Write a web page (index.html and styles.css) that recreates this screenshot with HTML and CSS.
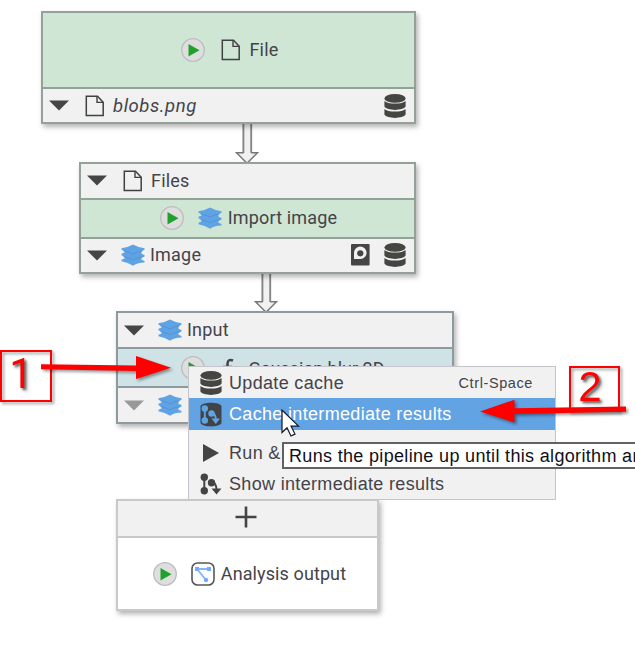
FILE: index.html
```
<!DOCTYPE html>
<html lang="en">
<head>
<meta charset="utf-8">
<title>Pipeline</title>
<link rel="stylesheet" href="styles.css">
</head>
<body>
<svg class="defs" aria-hidden="true">
  <defs>
    <symbol id="run" viewBox="0 0 24 24"><circle cx="12" cy="12" r="11.3" fill="#dedede" stroke="#bdbdbd" stroke-width="1.3"/><path d="M7.5 6v12.5l11-6.2z" fill="#20a12b"/></symbol>
    <symbol id="file" viewBox="0 0 20 22"><path d="M1.3 1.2h11.2l5.7 6v13.4H1.3z" fill="none" stroke="#3f4241" stroke-width="1.5"/><path d="M12 1.2v6.2h6.2" fill="none" stroke="#3f4241" stroke-width="1.4"/></symbol>
    <symbol id="tri" viewBox="0 0 20 11"><path d="M0 .5h20l-10 10z" fill="currentColor"/></symbol>
    <symbol id="db" viewBox="0 0 22 24"><g fill="#454541"><ellipse cx="11" cy="4.4" rx="10.6" ry="4.3"/><path d="M.4 7c3 3.4 18.200 3.400 21.200 0v5.600c-2.500 4.400-18.700 4.400-21.200 0zM.4 15c3 3.400 18.200 3.400 21.200 0v5.600c-2.500 4.400-18.700 4.400-21.200 0z"/></g></symbol>
    <symbol id="layers" viewBox="0 0 24 22"><path d="M.5 4.200Q7.500 3.200 12 .5q4.500 2.700 11.500 3.700v1.500l-3 1.600v2.400l3 1.300v1.500l-3 1.600v1.600l3 1.300v1.500Q17 18.500 12 21.700 7 18.500.5 17.200v-1.500l3-1.300v-1.600l-3-1.600V9.700l3-1.300V7.300l-3-1.600z" fill="#60a3e4"/><path d="M2.500 6.800q5 .7 9.500 3.200 4.500-2.500 9.500-3.200M2.500 12.600q5 .7 9.500 3.200 4.500-2.500 9.500-3.200" fill="none" stroke="#5095d6" stroke-width="1"/></symbol>
    <symbol id="preview" viewBox="0 0 19 22"><rect width="18.600" height="21.500" rx="1" fill="#454545"/><path d="M3 15V9.300a6.300 6.300 0 1 1 6.500 5.700z" fill="#f1f1f1"/><circle cx="9.300" cy="9.300" r="3.100" fill="#454545"/></symbol>
    <symbol id="graph" viewBox="0 0 22 22"><g fill="currentColor"><circle cx="4.300" cy="4.300" r="3.700"/><circle cx="4.300" cy="17.700" r="3.700"/><circle cx="11.500" cy="9.700" r="3.700"/><path d="M11.500 15.500h10L16.500 21.500z"/></g><path d="M4.300 4v14M11 8.500q5 .5 5.500 8" fill="none" stroke="currentColor" stroke-width="2"/></symbol>
    <symbol id="dbgraph" viewBox="0 0 22 25"><path d="M.5 4c2-4.500 19-4.500 21 0v17c-2 4.500-19 4.500-21 0z" fill="#414446"/><g fill="#62a3e4"><circle cx="4.800" cy="6.500" r="3.200"/><circle cx="4.800" cy="18.500" r="3.200"/><circle cx="11.500" cy="11.500" r="3.200"/><path d="M11.500 16.500h8.500L15.800 22z"/></g><path d="M4.800 6v12M11 10q4.500 1 4.900 7.500" fill="none" stroke="#62a3e4" stroke-width="1.900"/></symbol>
    <symbol id="output" viewBox="0 0 24 24"><rect x="1" y="1" width="22" height="22" rx="5.500" fill="#fff" stroke="#575757" stroke-width="1.600"/><path d="M6 7h12M6 7l9 11" fill="none" stroke="#82b4ff" stroke-width="1.800"/><g fill="#75a9fb"><path d="M4 5h4v4H4zM16 5h4v4h-4z"/><circle cx="15" cy="18" r="2.200"/></g></symbol>
    <symbol id="link" viewBox="0 0 24 40"><path d="M8.200 0v28.700H1.500L12 39.200l10.500-10.500h-6.300V0" fill="#f1f1f1"/><path d="M8.400 0v28.700M16.200 28.700V0" fill="none" stroke="#858585" stroke-width="1.900"/><path d="M8.800 28.700H1.500L12 39.200l10.500-10.500h-6.300" fill="none" stroke="#777" stroke-width="1.500"/></symbol>
  </defs>
</svg>
<main class="canvas">
  <svg class="link link-a"><use href="#link"/></svg>
  <svg class="link link-b"><use href="#link"/></svg>

  <section class="node green node-file">
    <div class="row algo tall"><svg class="run"><use href="#run"/></svg><svg class="file"><use href="#file"/></svg><span class="t-file">File</span></div>
    <div class="row slot"><svg class="tri"><use href="#tri"/></svg><svg class="file"><use href="#file"/></svg><em class="t-blobs">blobs.png</em><svg class="db end"><use href="#db"/></svg></div>
  </section>

  <section class="node green node-import">
    <div class="row slot"><svg class="tri"><use href="#tri"/></svg><svg class="file"><use href="#file"/></svg><span>Files</span></div>
    <div class="row algo"><svg class="run"><use href="#run"/></svg><svg class="layers"><use href="#layers"/></svg><span class="t-import">Import image</span></div>
    <div class="row slot"><svg class="tri"><use href="#tri"/></svg><svg class="layers"><use href="#layers"/></svg><span>Image</span><svg class="preview end"><use href="#preview"/></svg><svg class="db"><use href="#db"/></svg></div>
  </section>

  <section class="node blue node-blur">
    <div class="row slot"><svg class="tri"><use href="#tri"/></svg><svg class="layers"><use href="#layers"/></svg><span>Input</span></div>
    <div class="row algo"><svg class="run"><use href="#run"/></svg><svg class="fx" viewBox="0 0 16 22"><path d="M14 3.500q-5-2-5.500 3v14M4 10h9" fill="none" stroke="#444" stroke-width="2.500"/></svg><span class="t-blur">Gaussian blur 2D</span></div>
    <div class="row slot"><svg class="tri muted"><use href="#tri"/></svg><svg class="layers"><use href="#layers"/></svg></div>
  </section>

  <section class="node plain node-output">
    <div class="row add"><svg class="plus" viewBox="0 0 22 22"><path d="M11 .5v21M.5 11h21" stroke="#444" stroke-width="2.600"/></svg></div>
    <div class="row algo"><svg class="run"><use href="#run"/></svg><svg class="output"><use href="#output"/></svg><span class="t-output">Analysis output</span></div>
  </section>

  <div class="menu">
    <div class="item"><svg class="db"><use href="#db"/></svg><span>Update cache</span><kbd>Ctrl-Space</kbd></div>
    <div class="item active"><svg class="dbgraph"><use href="#dbgraph"/></svg><span>Cache intermediate results</span></div>
    <hr>
    <div class="item"><svg class="play" viewBox="0 0 16 18"><path d="M0 0l16 9-16 9z" fill="#444"/></svg><span>Run &amp;</span></div>
    <div class="item"><svg class="graph"><use href="#graph"/></svg><span>Show intermediate results</span></div>
  </div>
  <div class="tooltip">Runs the pipeline up until this algorithm and</div>
  <svg class="cursor" viewBox="0 0 19 28"><path d="M1 1v22.500l5-4.800 4 8.300 4-1.900-4-8h7.500z" fill="#fff" stroke="#111827" stroke-width="1.200"/></svg>

  <div class="callout one">1</div>
  <div class="callout two">2</div>
  <svg class="arrow arrow-one" viewBox="0 0 132 26"><path d="M0 9.200l95 1.300V1l35 11.700-35 11.300v-8L0 14.300z" fill="red"/></svg>
  <svg class="arrow arrow-two" viewBox="0 0 148 26"><path d="M0 12.500L34.500.7v8.500L146 7.500v5.200L34.500 15v8.500z" fill="red"/></svg>
</main>
</body>
</html>
```
FILE: styles.css
```
* { box-sizing: border-box; }
body { margin: 0; background: #fff; overflow: hidden; }
svg { display: block; flex: none; }
.defs { position: absolute; width: 0; height: 0; }
.canvas {
  position: relative;
  width: 635px;
  height: 657px;
  overflow: hidden;
  font: 18px/24px Roboto, "Liberation Sans", sans-serif;
  color: #444349;
}

/* Nodes */
.node {
  position: absolute;
  display: flex;
  flex-direction: column;
  border: 2px solid var(--line);
  background: #f1f1f1;
  box-shadow: 2px 3px 5px rgba(0, 0, 0, .3);
}
.green { --line: #93a198; --fill: #cfe6d5; }
.blue { --line: #8e9b9e; --fill: #cfe2e6; }
.plain { --line: #c9c9cc; --fill: #fff; }
.node-file { left: 41px; top: 11px; width: 375px; height: 113px; }
.node-import { left: 79px; top: 162px; width: 337px; height: 112px; }
.node-blur { left: 116px; top: 311px; width: 338px; height: 113px; }
.node-output { left: 116px; top: 499px; width: 263px; height: 112px; }
.row { display: flex; align-items: center; white-space: nowrap; }
.slot { flex: 1; padding: 0 8px 0 6px; }
.algo {
  height: 41px;
  padding-left: 2px;
  background: var(--fill);
  border: solid var(--line);
  border-width: 2px 0;
  justify-content: center;
}
.tall { height: 76px; padding-left: 3px; border-top: 0; }
.tri { width: 20px; height: 11px; margin-right: 16px; color: #454545; }
.muted { color: #999; }
.run { width: 24px; height: 24px; margin-right: 14px; }
.file { width: 20px; height: 22px; margin-right: 8px; }
.tall .file { margin-left: 2px; }
.slot .layers { margin-left: -2px; margin-right: 5px; }
.layers { width: 24px; height: 22px; margin: 0 6px 0 0; }
.db { width: 22px; height: 24px; }
.end { margin-left: auto; }
.preview { width: 19px; height: 22px; margin-right: 14px; }
.fx { width: 16px; height: 22px; margin: 0 13px 0 0; }
.output { width: 24px; height: 24px; margin-right: 6px; }
.add { height: 35px; padding: 0 3px 3px 0; justify-content: center; }
.plus { width: 22px; height: 22px; }
.node-blur .algo { padding: 0 4px 0 0; }
.node-output .algo { flex: 1; padding-left: 4px; border-width: 2px 0 0; }
.t-file { letter-spacing: .2px; }
.t-blobs { font-size: 18.500px; letter-spacing: .55px; }
.slot span { letter-spacing: .2px; }
.t-import { letter-spacing: .15px; }
.t-blur { margin-top: 2px; }
.t-output { letter-spacing: .1px; }

.link { position: absolute; width: 24px; height: 40px; }
.link-a { left: 235px; top: 124px; }
.link-b { left: 254px; top: 273px; }

/* Context menu */
.menu {
  position: absolute;
  left: 188px;
  top: 366px;
  width: 368px;
  height: 134px;
  border: 1.500px solid #c4c4ca;
  background: #f1f1f1;
  font-family: "Liberation Sans", Arial, sans-serif;
  letter-spacing: .33px;
}
.item { display: flex; align-items: center; height: 31px; padding: 0 22px 0 11px; }
.item svg { margin-right: 7px; }
.item kbd { margin-left: auto; font: 14.500px "Liberation Sans", Arial, sans-serif; letter-spacing: .6px; }
.active { height: 32px; background: #62a3e4; color: #fff; }
.menu hr { height: 7px; margin: 0; border: 0; }
.dbgraph { width: 22px; height: 25px; }
.play { width: 16px; height: 18px; margin-left: 3px; }
.item .play { margin-right: 10px; }
.graph { width: 22px; height: 22px; color: #444; }
.tooltip {
  position: absolute;
  left: 282px;
  top: 442px;
  width: 390px;
  height: 27px;
  padding: 1px 5px;
  border: 2px solid #626262;
  background: #fff;
  color: #101018;
  font-family: "Liberation Sans", Arial, sans-serif;
  line-height: 22px;
  letter-spacing: .33px;
  white-space: nowrap;
}
.cursor { position: absolute; left: 281px; top: 409px; width: 19px; height: 28px; }

/* Annotations */
.callout {
  position: absolute;
  border: 2px solid red;
  color: red;
  font: 42px/42px "Liberation Sans", Arial, sans-serif;
  text-align: center;
  text-shadow: 2px 2px 2px rgba(0, 0, 0, .35);
  filter: drop-shadow(2px 2px 1.500px rgba(0, 0, 0, .4));
}
.one { left: 0; top: 350px; width: 52px; height: 52px; padding: 1px 10px 0 0; font-family: Roboto, sans-serif; }
.two { left: 569px; top: 366px; width: 51px; height: 46px; padding-right: 9px; line-height: 38px; }
.arrow { position: absolute; filter: drop-shadow(2px 2px 1.500px rgba(0, 0, 0, .4)); }
.arrow-one { left: 41px; top: 355px; width: 132px; height: 26px; }
.arrow-two { left: 480px; top: 399px; width: 148px; height: 26px; }
```
